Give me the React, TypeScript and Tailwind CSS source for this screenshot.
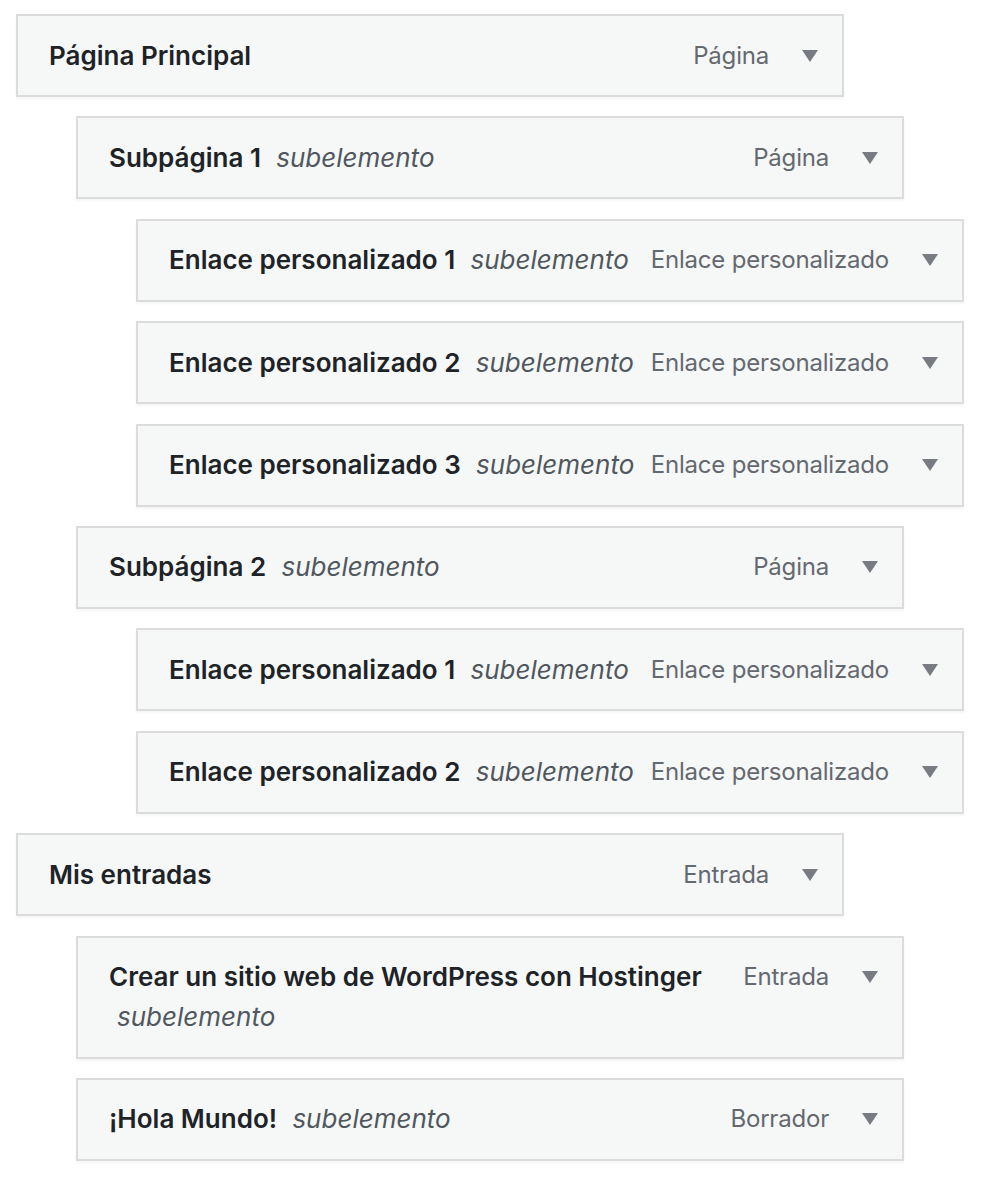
import React from "react";

type Item = { depth: number; title: string; sub?: boolean; type: string };

const items: Item[] = [
  { depth: 0, title: "Página Principal", type: "Página" },
  { depth: 1, title: "Subpágina 1", sub: true, type: "Página" },
  { depth: 2, title: "Enlace personalizado 1", sub: true, type: "Enlace personalizado" },
  { depth: 2, title: "Enlace personalizado 2", sub: true, type: "Enlace personalizado" },
  { depth: 2, title: "Enlace personalizado 3", sub: true, type: "Enlace personalizado" },
  { depth: 1, title: "Subpágina 2", sub: true, type: "Página" },
  { depth: 2, title: "Enlace personalizado 1", sub: true, type: "Enlace personalizado" },
  { depth: 2, title: "Enlace personalizado 2", sub: true, type: "Enlace personalizado" },
  { depth: 0, title: "Mis entradas", type: "Entrada" },
  { depth: 1, title: "Crear un sitio web de WordPress con Hostinger", sub: true, type: "Entrada" },
  { depth: 1, title: "¡Hola Mundo!", sub: true, type: "Borrador" },
];

const indent = ["ml-[16px]", "ml-[76px]", "ml-[136px]"];

function Row({ item }: { item: Item }) {
  return (
    <div
      className={`${indent[item.depth]} w-[828px] border-2 border-[#dcdcde] bg-[#f6f7f7] shadow-[0_2px_2px_rgba(0,0,0,0.04)] py-[19.5px] pl-[31px] pr-[24px] flex items-start leading-[40px] text-[26px]`}
    >
      <div className="flex-1 min-w-0 pr-[10px]">
        <span className="font-semibold text-[#1d2327]">{item.title}</span>{" "}
        {item.sub && <span className="italic text-[#50575e] ml-[8px]">subelemento</span>}
      </div>
      <div className="flex items-center h-[40px] shrink-0">
        <span className="text-[#646970] whitespace-nowrap text-[24px] tracking-[-0.2px]">{item.type}</span>
        <svg width="16" height="12" viewBox="0 0 16 12" className="ml-[33px]">
          <polygon points="0,0 16,0 8,12" fill="#787c82" />
        </svg>
      </div>
    </div>
  );
}

export default function App() {
  return (
    <div
      className="min-h-[1180px] w-[988px] bg-white pt-[14px] flex flex-col gap-[19.4px]"
      style={{ fontFamily: "Inter, 'Noto Sans', sans-serif" }}
    >
      {items.map((it, i) => (
        <Row key={i} item={it} />
      ))}
    </div>
  );
}
